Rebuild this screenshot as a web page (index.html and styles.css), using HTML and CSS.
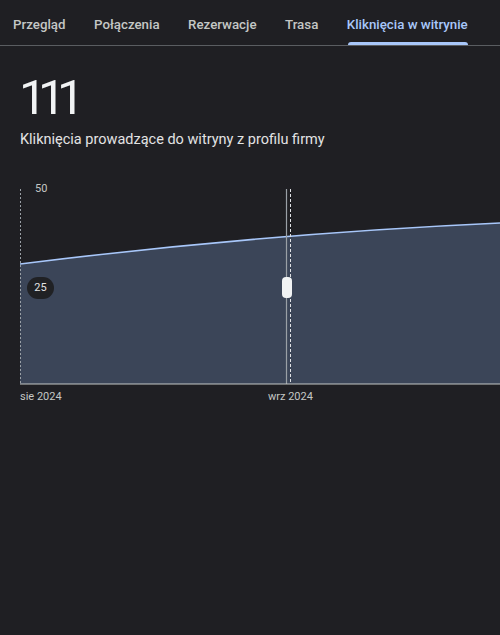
FILE: index.html
```html
<!DOCTYPE html>
<html lang="pl">
<head>
<meta charset="utf-8">
<link rel="stylesheet" href="styles.css">
</head>
<body>
<nav class="tabs">
  <div class="tab">Przegląd</div>
  <div class="tab">Połączenia</div>
  <div class="tab">Rezerwacje</div>
  <div class="tab">Trasa</div>
  <div class="tab active">Kliknięcia w witrynie</div>
</nav>
<main class="content">
  <div class="big-number">111</div>
  <div class="subtitle">Kliknięcia prowadzące do witryny z profilu firmy</div>
  <div class="chart">
    <svg class="chart-svg" width="480" height="196" viewBox="0 0 480 196">
      <path d="M0 75 Q 240 45 480 34 L480 195 L0 195 Z" fill="#3b4558"/>
      <path d="M0 75 Q 240 45 480 34" fill="none" stroke="#a8c7fa" stroke-width="1.6"/>
      <line x1="0.5" y1="0" x2="0.5" y2="195" stroke="#9aa0a6" stroke-width="1" stroke-dasharray="2 2"/>
      <line x1="266.5" y1="0" x2="266.5" y2="195" stroke="#9aa0a6" stroke-width="1.2"/>
      <line x1="270.5" y1="0" x2="270.5" y2="195" stroke="#dfe1e5" stroke-width="1" stroke-dasharray="3 2"/>
      <line x1="0" y1="195" x2="480" y2="195" stroke="#c4c7c5" stroke-width="1.2"/>
    </svg>
    <span class="y-label y50">50</span>
    <span class="y-pill">25</span>
    <span class="handle"></span>
  </div>
  <div class="x-axis">
    <span class="x-label" style="left:0px">sie 2024</span>
    <span class="x-label" style="left:248px">wrz 2024</span>
  </div>
</main>
</body>
</html>
```
FILE: styles.css
```css
html, body {
  margin: 0;
  padding: 0;
  background: #1f1f23;
  font-family: Roboto, "Liberation Sans", sans-serif;
  color: #e3e3e3;
}
body {
  width: 500px;
  height: 635px;
  overflow: hidden;
}
.tabs {
  display: flex;
  gap: 28.5px;
  padding: 0 0 0 13px;
  height: 45px;
  border-bottom: 1px solid #5a5d61;
  white-space: nowrap;
}
.tab {
  font-size: 13.3px;
  font-weight: 500;
  color: #c4c7c5;
  line-height: 16px;
  padding-top: 17px;
  box-sizing: border-box;
  position: relative;
  height: 45px;
}
.tab.active {
  color: #a8c7fa;
}
.tab.active::after {
  content: "";
  position: absolute;
  left: 1px;
  right: 0;
  bottom: 0;
  height: 3px;
  background: #a8c7fa;
  border-radius: 3px 3px 0 0;
}
.content {
  padding: 0 0 0 20px;
}
.big-number {
  font-size: 49px;
  font-weight: 400;
  letter-spacing: -8.5px;
  color: #f1f3f4;
  line-height: 56px;
  margin-top: 24px;
  margin-left: -1px;
}
.subtitle {
  font-size: 14.5px;
  color: #e3e3e3;
  line-height: 18px;
  margin-top: 5px;
}
.chart {
  position: relative;
  margin-top: 40px;
  width: 480px;
  height: 196px;
}
.chart-svg {
  display: block;
}
.y-label {
  position: absolute;
  font-size: 11px;
  color: #c4c7c5;
  line-height: 12px;
}
.y50 {
  left: 15px;
  top: -6px;
}
.y-pill {
  position: absolute;
  left: 7px;
  top: 88px;
  width: 27px;
  height: 22px;
  border-radius: 11px;
  background: #202124;
  color: #e3e3e3;
  font-size: 11px;
  line-height: 22px;
  text-align: center;
}
.handle {
  position: absolute;
  left: 262px;
  top: 88px;
  width: 10px;
  height: 21px;
  border-radius: 4px;
  background: #f1f3f4;
}
.x-axis {
  position: relative;
  height: 20px;
  margin-top: 5px;
}
.x-label {
  position: absolute;
  top: 0;
  font-size: 11px;
  color: #c4c7c5;
  line-height: 14px;
}
```
